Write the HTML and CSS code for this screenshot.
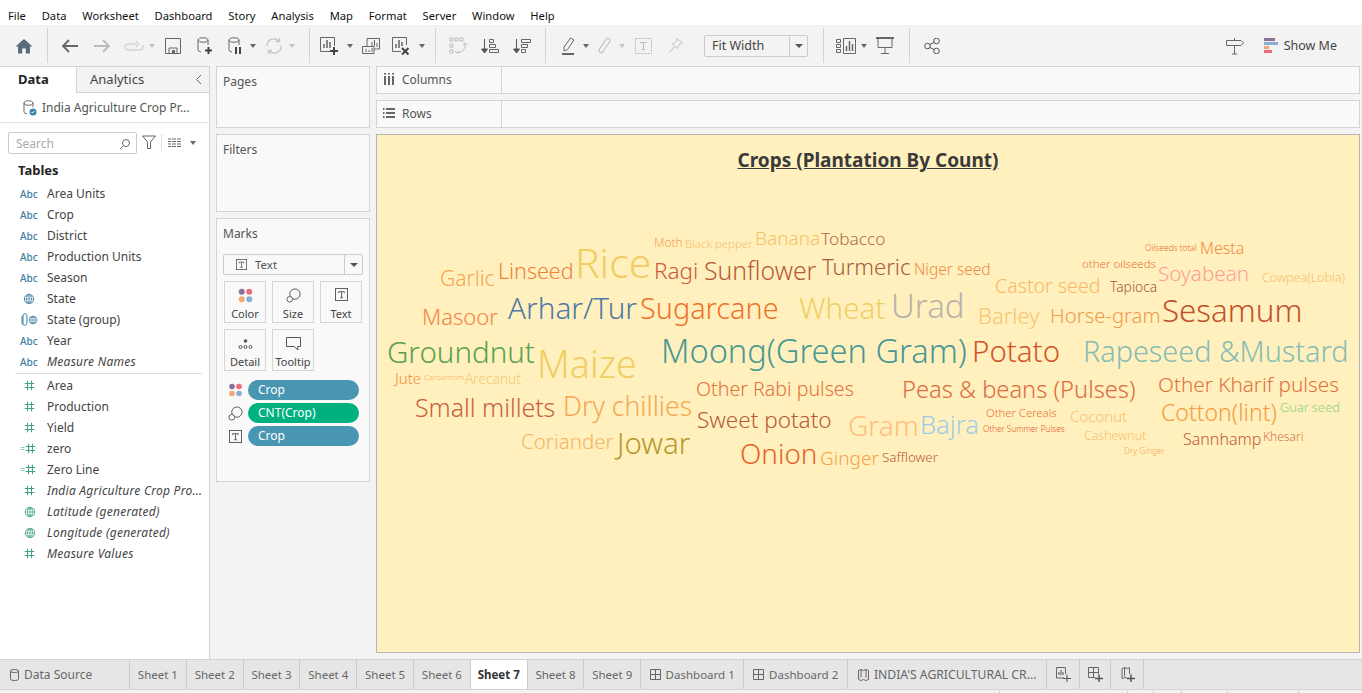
FILE: index.html
```html
<!DOCTYPE html>
<html>
<head>
    <title>Tableau - Sheet 7</title>
    <link rel="stylesheet" href="styles.css">
</head>
<body>
    <svg class="defs" width="0" height="0">
        <symbol id="i-abc-globe" viewBox="0 0 14 14"><circle cx="7" cy="7" r="5.5" fill="none" stroke="currentColor"/><path d="M1.5 7h11M7 1.5v11M3 3.5h8M3 10.500h8M7 1.500c-4 3-4 8 0 11M7 1.500c4 3 4 8 0 11" fill="none" stroke="currentColor" stroke-width=".8"/></symbol>
        <symbol id="i-hash" viewBox="0 0 14 14"><path d="M4.500 1v12M9.500 1v12M1 4.500h12M1 9.500h12" fill="none" stroke="currentColor" stroke-width="1.300"/></symbol>
        <symbol id="i-colors" viewBox="0 0 14 14"><circle cx="3.500" cy="3.500" r="2.800" fill="#8a7298"/><circle cx="10.500" cy="3.500" r="2.800" fill="#f0697c"/><circle cx="3.500" cy="10.500" r="2.800" fill="#f2a875"/><circle cx="10.500" cy="10.500" r="2.800" fill="#8aaed2"/></symbol>
        <symbol id="i-size" viewBox="0 0 16 16"><circle cx="9.500" cy="6.500" r="5.500" fill="none" stroke="#555"/><circle cx="4" cy="12" r="3" fill="#fff" stroke="#555"/></symbol>
        <symbol id="i-text" viewBox="0 0 14 14"><rect x=".5" y=".5" width="13" height="13" fill="none" stroke="#555"/><path d="M4 4h6M7 4v6.500M5.500 10.500h3M4 4v1.500M10 4v1.500" fill="none" stroke="#555"/></symbol>
    </svg>

    <div class="menu-bar">
        <span>File</span><span>Data</span><span>Worksheet</span><span>Dashboard</span><span>Story</span><span>Analysis</span><span>Map</span><span>Format</span><span>Server</span><span>Window</span><span>Help</span>
    </div>

    <div class="toolbar">
        <div class="tb-group g-home">
            <span class="tb"><svg width="18" height="16" viewBox="0 0 18 16"><path d="M9 1 0.500 8.500H3V15.500H7.200V10.500H10.800V15.500H15V8.500H17.500Z" fill="#5b6b7d"/></svg></span>
        </div>
        <div class="tb-group g-file">
            <span class="tb"><svg width="18" height="16" viewBox="0 0 18 16"><path d="M17 8H2M8 2 2 8l6 6" fill="none" stroke="#666" stroke-width="1.800"/></svg></span>
            <span class="tb"><svg width="18" height="16" viewBox="0 0 18 16"><path d="M1 8H16M10 2l6 6-6 6" fill="none" stroke="#bbb" stroke-width="1.800"/></svg></span>
            <span class="tb"><svg width="20" height="12" viewBox="0 0 20 12"><path d="M13 4H4a3 3 0 0 0 0 6h12a3 3 0 0 0 3-3V5M12 1l3 3-3 3" fill="none" stroke="#c4c4c4"/></svg></span>
            <span class="caret off"></span>
            <span class="tb"><svg width="16" height="16" viewBox="0 0 16 16"><path d="M.5.500h15v15H.5z" fill="none" stroke="#666"/><path d="M4 10h8v5.500H4z" fill="none" stroke="#666"/><path d="M7 12h3v3H7z" fill="#666"/></svg></span>
            <span class="tb"><svg width="16" height="18" viewBox="0 0 16 18"><path d="M1 3v10q0 1.500 3 2M1 3c0-3 10-3 10 0s-10 3-10 0M11 3v5" fill="none" stroke="#666"/><path d="M8 13.500h7M11.500 10v7" stroke="#444" stroke-width="2"/></svg></span>
            <span class="tb pull"><svg width="14" height="18" viewBox="0 0 14 18"><path d="M1 3v10q0 1.500 3 2M1 3c0-3 10-3 10 0s-10 3-10 0M11 3v5" fill="none" stroke="#666"/><path d="M8 10v7M12 10v7" stroke="#444" stroke-width="2"/></svg></span>
            <span class="caret"></span>
            <span class="tb"><svg width="18" height="18" viewBox="0 0 18 18"><path d="M2 9a7 7 0 0 1 12-5M16 9a7 7 0 0 1-12 5M14.500 1v3.500H11M3.500 17v-3.500H7" fill="none" stroke="#c4c4c4" stroke-width="1.300"/></svg></span>
            <span class="caret off"></span>
        </div>
        <div class="tb-group g-sheet">
            <span class="tb"><svg width="18" height="18" viewBox="0 0 18 18"><path d="M10 14.500H.5V.5h14V9" fill="none" stroke="#666"/><path d="M4 11V7M7 11V3M10 11V5" stroke="#666" stroke-width="1.500"/><path d="M10 14h8M14 10v8" stroke="#444" stroke-width="2"/></svg></span>
            <span class="caret"></span>
            <span class="tb"><svg width="18" height="16" viewBox="0 0 18 16"><path d="M5 8V.5h12.500V11H12" fill="none" stroke="#666"/><path d="M.5 8.500H12V15.500H.5z" fill="#f3f3f3" stroke="#666"/><path d="M10 8V4M12.500 8V2M15 9V5M4 14v-3M7 14v-2M10 14v-4" stroke="#666"/></svg></span>
            <span class="tb pull"><svg width="18" height="18" viewBox="0 0 18 18"><path d="M9 14.500H.5V.5h14V8" fill="none" stroke="#666"/><path d="M4 11V7M7 11V3M10 9V5" stroke="#666" stroke-width="1.500"/><path d="M10 11l6.500 6.500M16.500 11 10 17.500" stroke="#444" stroke-width="2"/></svg></span>
            <span class="caret"></span>
        </div>
        <div class="tb-group g-sort">
            <span class="tb"><svg width="18" height="18" viewBox="0 0 18 18"><path d="M1 1h3v3H1zM6 1h3v3H6zM11 1h3v3h-3zM1 7h3v3H1zM1 13h3v3H1z" fill="none" stroke="#bbb"/><path d="M16 6c1 5-2 9-8 10M6 14l2 2 2-2M14 8l2-2 2 2" fill="none" stroke="#bbb"/></svg></span>
            <span class="tb"><svg width="18" height="16" viewBox="0 0 18 16"><path d="M3.500 1v13M.5 11l3 4 3-4z" fill="#555" stroke="#555"/><path d="M8.500 1.500h4v3h-4zM8.500 6.500h6v3h-6zM8.500 11.500h9v3h-9z" fill="none" stroke="#666"/></svg></span>
            <span class="tb"><svg width="18" height="16" viewBox="0 0 18 16"><path d="M3.500 1v13M.5 11l3 4 3-4z" fill="#555" stroke="#555"/><path d="M8.500 1.500h9v3h-9zM8.500 6.500h6v3h-6zM8.500 11.500h4v3h-4z" fill="none" stroke="#666"/></svg></span>
        </div>
        <div class="tb-group g-mark">
            <span class="tb"><svg width="14" height="18" viewBox="0 0 14 18"><path d="M9.500 1 13 3 6.500 12.500 3 14 3 10z" fill="none" stroke="#666"/><path d="M1 17h12" stroke="#666" stroke-width="2"/></svg></span>
            <span class="caret"></span>
            <span class="tb pull-more"><svg width="14" height="18" viewBox="0 0 14 18"><path d="M3 11 9 2.500c2-2.500 5 0 3.500 2.500L6 14.500c-1.500 2.500-5 .500-3.500-2.500L8 4.500" fill="none" stroke="#c0c0c0" stroke-width="1.200"/></svg></span>
            <span class="caret off"></span>
            <span class="tb"><svg width="17" height="16" viewBox="0 0 17 16"><path d="M.5.500h16v15H.5z" fill="none" stroke="#bbb" stroke-dasharray="2 1"/><path d="M5 4.500h7M8.500 4.500v7M7 11.500h3" fill="none" stroke="#bbb"/></svg></span>
            <span class="tb"><svg width="15" height="16" viewBox="0 0 15 16"><path d="M9 .5 14.500 5 11.500 6 9.500 10.500 4.500 6 8.500 3.500zM6.500 8.500 1 15" fill="none" stroke="#c0c0c0"/></svg></span>
            <div class="fit-select"><span class="fit-label">Fit Width</span><span class="fit-arrow"><span class="caret dark"></span></span></div>
        </div>
        <div class="tb-group g-show">
            <span class="tb"><svg width="20" height="16" viewBox="0 0 20 16"><path d="M.5 1.500h4v3h-4zM.5 6.500h4v3h-4zM.5 11.500h4v3h-4zM7.500.5h12v15h-12z" fill="none" stroke="#666"/><path d="M10.500 13V8M13.500 13V3M16.500 13V6" stroke="#666" stroke-width="1.500"/></svg></span>
            <span class="caret"></span>
            <span class="tb"><svg width="18" height="17" viewBox="0 0 18 17"><path d="M0 1h18" stroke="#666" stroke-width="2"/><path d="M2 1v9.500h14V1M9 10.500V16M5 16.500h8" fill="none" stroke="#666"/></svg></span>
        </div>
        <div class="tb-group g-share">
            <span class="tb"><svg width="16" height="16" viewBox="0 0 16 16"><circle cx="3.500" cy="8" r="2.800" fill="none" stroke="#555"/><circle cx="12.500" cy="3" r="2.800" fill="none" stroke="#555"/><circle cx="12.500" cy="13" r="2.800" fill="none" stroke="#555"/><path d="M6 6.500 10 4.400M6 9.500l4 2.100" stroke="#555"/></svg></span>
        </div>
        <div class="tb-right">
            <svg width="18" height="18" viewBox="0 0 18 18"><path d="M.5 3.500H15L17.500 6 15 8.500H.5zM8.500 1v2.500M8.500 8.500V17M6 17h5" fill="none" stroke="#666"/></svg>
            <span class="show-me">
                <span class="sm-bars"><i class="b1"></i><i class="b2"></i><i class="b3"></i><i class="b4"></i></span>
                Show Me
            </span>
        </div>
    </div>

    <div class="workspace">
        <div class="side-pane">
            <div class="pane-tabs">
                <div class="pane-tab active">Data</div>
                <div class="pane-tab">Analytics<svg class="chev" width="7" height="11" viewBox="0 0 7 11"><path d="M6 1 1.500 5.500 6 10" fill="none" stroke="#666"/></svg></div>
            </div>
            <div class="source-row">
                <svg width="14" height="16" viewBox="0 0 14 16"><path d="M1 3v9q0 1.500 3 2M1 3c0-3 9-3 9 0s-9 3-9 0M10 3v4" fill="none" stroke="#666"/><circle cx="10" cy="12" r="3.500" fill="#3d86a8"/><path d="M8.500 12l1 1 2-2" fill="none" stroke="#fff"/></svg>
                India Agriculture Crop Pr...
            </div>
            <div class="search-row">
                <div class="search-box">Search
                    <svg width="12" height="12" viewBox="0 0 12 12"><circle cx="7" cy="5" r="3.500" fill="none" stroke="#666"/><path d="M4.500 7.500 1 11" stroke="#666"/></svg>
                </div>
                <svg class="funnel" width="14" height="15" viewBox="0 0 14 15"><path d="M.5 1h13L8.500 7v6.500h-3V7z" fill="none" stroke="#666"/></svg>
                <span class="search-sep"></span>
                <svg width="13" height="9" viewBox="0 0 13 9"><path d="M0 1h3M4 1h4M9 1h4M0 3.500h3M4 3.500h4M9 3.500h4M0 6h3M4 6h4M9 6h4M0 8.500h3M4 8.500h4M9 8.500h4" stroke="#666"/></svg>
                <span class="caret search-caret"></span>
            </div>
            <div class="tables-title">Tables</div>
            <ul class="field-list">
                <li><span class="fi abc">Abc</span>Area Units</li>
                <li><span class="fi abc">Abc</span>Crop</li>
                <li><span class="fi abc">Abc</span>District</li>
                <li><span class="fi abc">Abc</span>Production Units</li>
                <li><span class="fi abc">Abc</span>Season</li>
                <li><span class="fi blue"><svg width="12" height="12"><use href="#i-abc-globe"/></svg></span>State</li>
                <li><span class="fi blue group-ic"><svg width="7" height="13" viewBox="0 0 7 13"><path d="M2 11V3c0-3 4-3 4 0v7c0 3-5 3-5 0V3" fill="none" stroke="currentColor"/></svg><svg width="10" height="10"><use href="#i-abc-globe"/></svg></span>State (group)</li>
                <li><span class="fi abc">Abc</span>Year</li>
                <li class="ital"><span class="fi abc">Abc</span>Measure Names</li>
            </ul>
            <div class="list-sep"></div>
            <ul class="field-list">
                <li><span class="fi green"><svg width="11" height="11"><use href="#i-hash"/></svg></span>Area</li>
                <li><span class="fi green"><svg width="11" height="11"><use href="#i-hash"/></svg></span>Production</li>
                <li><span class="fi green"><svg width="11" height="11"><use href="#i-hash"/></svg></span>Yield</li>
                <li><span class="fi green calc">=<svg width="11" height="11"><use href="#i-hash"/></svg></span>zero</li>
                <li><span class="fi green calc">=<svg width="11" height="11"><use href="#i-hash"/></svg></span>Zero Line</li>
                <li class="ital"><span class="fi green"><svg width="11" height="11"><use href="#i-hash"/></svg></span>India Agriculture Crop Pro...</li>
                <li class="ital"><span class="fi green"><svg width="12" height="12"><use href="#i-abc-globe"/></svg></span>Latitude (generated)</li>
                <li class="ital"><span class="fi green"><svg width="12" height="12"><use href="#i-abc-globe"/></svg></span>Longitude (generated)</li>
                <li class="ital"><span class="fi green"><svg width="11" height="11"><use href="#i-hash"/></svg></span>Measure Values</li>
            </ul>
        </div>

        <div class="cards">
            <div class="card pages-card">Pages</div>
            <div class="card filters-card">Filters</div>
            <div class="card marks-card">
                <div class="marks-title">Marks</div>
                <div class="mark-type">
                    <span class="mark-type-name"><svg width="11" height="11"><use href="#i-text"/></svg>Text</span>
                    <span class="mark-type-arrow"><span class="caret dark"></span></span>
                </div>
                <div class="mark-buttons">
                    <div class="mark-btn"><svg width="15" height="15"><use href="#i-colors"/></svg>Color</div>
                    <div class="mark-btn"><svg width="15" height="15"><use href="#i-size"/></svg>Size</div>
                    <div class="mark-btn"><svg width="13" height="13"><use href="#i-text"/></svg>Text</div>
                    <div class="mark-btn"><svg width="15" height="15" viewBox="0 0 15 15"><circle cx="7.500" cy="5" r="1.800" fill="#555"/><circle cx="2.500" cy="11" r="1.500" fill="none" stroke="#555"/><circle cx="7.500" cy="11" r="1.500" fill="none" stroke="#555"/><circle cx="12.500" cy="11" r="1.500" fill="none" stroke="#555"/></svg>Detail</div>
                    <div class="mark-btn"><svg width="15" height="15" viewBox="0 0 15 15"><path d="M.5 1.500h14v9h-3l.5 3.500-4-3.500H.5z" fill="none" stroke="#555"/></svg>Tooltip</div>
                </div>
                <div class="pill-row"><svg width="14" height="14"><use href="#i-colors"/></svg><span class="pill blue-pill">Crop</span></div>
                <div class="pill-row"><svg width="15" height="15"><use href="#i-size"/></svg><span class="pill green-pill">CNT(Crop)</span></div>
                <div class="pill-row"><svg width="13" height="13"><use href="#i-text"/></svg><span class="pill blue-pill">Crop</span></div>
            </div>
        </div>

        <div class="main">
            <div class="shelf">
                <div class="shelf-label"><svg width="12" height="12" viewBox="0 0 12 12"><path d="M2 3v9M6 3v9M10 3v9M2 0v1.500M6 0v1.500M10 0v1.500" stroke="#666" stroke-width="2"/></svg>Columns</div>
            </div>
            <div class="shelf">
                <div class="shelf-label"><svg width="12" height="12" viewBox="0 0 12 12"><path d="M3 2h9M3 6h9M3 10h9M0 2h1.500M0 6h1.500M0 10h1.500" stroke="#666" stroke-width="2"/></svg>Rows</div>
            </div>
            <div class="view">
                <div class="view-title">Crops (Plantation By Count)</div>
                <span class="word" style="--x:575;--b:277;--s:41;color:#f1ce63">Rice</span>
                <span class="word" style="--x:537;--b:377;--s:37.600;color:#f1ce63">Maize</span>
                <span class="word" style="--x:387;--b:362;--s:29.500;color:#59a14f">Groundnut</span>
                <span class="word" style="--x:661;--b:363;--s:32.600;color:#499894">Moong(Green Gram)</span>
                <span class="word" style="--x:1162;--b:322;--s:31.300;color:#c2502d">Sesamum</span>
                <span class="word" style="--x:1083;--b:361;--s:28.800;color:#86bcb6">Rapeseed &amp;Mustard</span>
                <span class="word" style="--x:972;--b:361;--s:29.500;color:#d4532a">Potato</span>
                <span class="word" style="--x:891;--b:317;--s:33;color:#bab0ac">Urad</span>
                <span class="word" style="--x:799;--b:318;--s:29.500;color:#f1ce63">Wheat</span>
                <span class="word" style="--x:508;--b:318;--s:29.700;color:#4e79a7">Arhar/Tur</span>
                <span class="word" style="--x:640;--b:318;--s:28.800;color:#f0702a">Sugarcane</span>
                <span class="word" style="--x:740;--b:464;--s:27.800;color:#e6622a">Onion</span>
                <span class="word" style="--x:848;--b:435;--s:28;color:#ffbe7d">Gram</span>
                <span class="word" style="--x:920;--b:434;--s:25.500;color:#a0cbe8">Bajra</span>
                <span class="word" style="--x:902;--b:398;--s:23.700;color:#dd6a3c">Peas &amp; beans (Pulses)</span>
                <span class="word" style="--x:1158;--b:392;--s:20.700;color:#e0703a">Other Kharif pulses</span>
                <span class="word" style="--x:1161;--b:421;--s:23;color:#f59a42">Cotton(lint)</span>
                <span class="word" style="--x:415;--b:416;--s:24.800;color:#c8603c">Small millets</span>
                <span class="word" style="--x:563;--b:416;--s:26.600;color:#f5a655">Dry chillies</span>
                <span class="word" style="--x:696;--b:396;--s:19.600;color:#e4703c">Other Rabi pulses</span>
                <span class="word" style="--x:697;--b:428;--s:22.500;color:#b85a38">Sweet potato</span>
                <span class="word" style="--x:617;--b:453;--s:29.500;color:#b6992d">Jowar</span>
                <span class="word" style="--x:521;--b:448;--s:20.500;color:#f5b564">Coriander</span>
                <span class="word" style="--x:820;--b:465;--s:19;color:#f8a04c">Ginger</span>
                <span class="word" style="--x:882;--b:462;--s:13.400;color:#b85a38">Safflower</span>
                <span class="word" style="--x:395;--b:384;--s:15;color:#f58c3c">Jute</span>
                <span class="word" style="--x:424;--b:380;--s:8;color:#f8b060">Cardamom</span>
                <span class="word" style="--x:465;--b:384;--s:13.700;color:#f5c870">Arecanut</span>
                <span class="word" style="--x:422;--b:324;--s:22;color:#f2854a">Masoor</span>
                <span class="word" style="--x:440;--b:286;--s:21;color:#f5a655">Garlic</span>
                <span class="word" style="--x:498;--b:278;--s:21.500;color:#f0803c">Linseed</span>
                <span class="word" style="--x:654;--b:279;--s:22.500;color:#cc5a38">Ragi</span>
                <span class="word" style="--x:704;--b:279;--s:24.800;color:#b85a38">Sunflower</span>
                <span class="word" style="--x:822;--b:274;--s:22;color:#a85a40">Turmeric</span>
                <span class="word" style="--x:914;--b:275;--s:15.500;color:#f08a4a">Niger seed</span>
                <span class="word" style="--x:654;--b:247;--s:12;color:#f59a55">Moth</span>
                <span class="word" style="--x:685;--b:248;--s:11.400;color:#f5c070">Black pepper</span>
                <span class="word" style="--x:755;--b:245;--s:19;color:#f5c468">Banana</span>
                <span class="word" style="--x:821;--b:245;--s:17.300;color:#b06a48">Tobacco</span>
                <span class="word" style="--x:995;--b:293;--s:19.600;color:#f8b868">Castor seed</span>
                <span class="word" style="--x:1110;--b:292;--s:13.800;color:#a05a40">Tapioca</span>
                <span class="word" style="--x:978;--b:323;--s:22;color:#f8c46c">Barley</span>
                <span class="word" style="--x:1050;--b:322;--s:20.300;color:#f09a50">Horse-gram</span>
                <span class="word" style="--x:1145;--b:251;--s:8.400;color:#e86a30">Oilseeds total</span>
                <span class="word" style="--x:1200;--b:254;--s:16;color:#f28a48">Mesta</span>
                <span class="word" style="--x:1082;--b:268;--s:11.500;color:#e8703a">other oilseeds</span>
                <span class="word" style="--x:1158;--b:281;--s:20.700;color:#ff9d9a">Soyabean</span>
                <span class="word" style="--x:1262;--b:283;--s:12.500;color:#f8c070">Cowpea(Lobia)</span>
                <span class="word" style="--x:1280;--b:412;--s:12.800;color:#8cd17d">Guar seed</span>
                <span class="word" style="--x:986;--b:417;--s:11.300;color:#e8703a">Other Cereals</span>
                <span class="word" style="--x:1070;--b:422;--s:15;color:#f8c070">Coconut</span>
                <span class="word" style="--x:983;--b:432;--s:8.200;color:#e0562a">Other Summer Pulses</span>
                <span class="word" style="--x:1084;--b:441;--s:12.400;color:#f8c070">Cashewnut</span>
                <span class="word" style="--x:1124;--b:454;--s:8.300;color:#f5a655">Dry Ginger</span>
                <span class="word" style="--x:1183;--b:445;--s:16;color:#c05a38">Sannhamp</span>
                <span class="word" style="--x:1263;--b:441;--s:12;color:#d8744a">Khesari</span>
            </div>
        </div>
    </div>

    <div class="tab-bar">
        <div class="tab source-tab"><svg width="9" height="12" viewBox="0 0 9 12"><path d="M.5 2v8c0 2 8 2 8 0V2M.5 2c0-2 8-2 8 0s-8 2-8 0" fill="none" stroke="#666"/></svg>Data Source</div>
        <div class="tab w57">Sheet 1</div>
        <div class="tab w57">Sheet 2</div>
        <div class="tab w57">Sheet 3</div>
        <div class="tab w57">Sheet 4</div>
        <div class="tab w57">Sheet 5</div>
        <div class="tab w57">Sheet 6</div>
        <div class="tab w57 current">Sheet 7</div>
        <div class="tab w57">Sheet 8</div>
        <div class="tab w57">Sheet 9</div>
        <div class="tab w103"><svg width="11" height="11" viewBox="0 0 11 11"><path d="M.5.500h10v10H.5zM5.500.5v10M.5 5.500h10" fill="none" stroke="#666"/></svg>Dashboard 1</div>
        <div class="tab w104"><svg width="11" height="11" viewBox="0 0 11 11"><path d="M.5.500h10v10H.5zM5.500.5v10M.5 5.500h10" fill="none" stroke="#666"/></svg>Dashboard 2</div>
        <div class="tab w199"><svg width="11" height="12" viewBox="0 0 11 12"><path d="M.5 1.500 3 .5l2.500 1 2.500-1 2.500 1v9l-2.500 1-2.500-1-2.500 1-2.500-1zM3 .5v8M8 .5v8" fill="none" stroke="#666"/></svg>INDIA'S AGRICULTURAL CR...</div>
        <div class="tab w33"><svg width="15" height="15" viewBox="0 0 15 15"><path d="M8 11H.5V.5h9V7" fill="none" stroke="#666"/><path d="M3 8V5M5 8V3M7 8V5M7 11.500h8M11 7.500v8" stroke="#555"/></svg></div>
        <div class="tab w31"><svg width="15" height="15" viewBox="0 0 15 15"><path d="M7 10.500H.5V.5h10V7M5.500.5v10M.5 5.500h10" fill="none" stroke="#666"/><path d="M7 11.500h8M11 7.500v8" stroke="#555" stroke-width="1.500"/></svg></div>
        <div class="tab w33"><svg width="15" height="15" viewBox="0 0 15 15"><path d="M7 11 4.500 10.500 2 11.500V1.500L4.500.5 7 1.500 9.500.5V7M4.500.5v9" fill="none" stroke="#666"/><path d="M7 11.500h8M11 7.500v8" stroke="#555" stroke-width="1.500"/></svg></div>
    </div>
    <div class="status-bar"><span class="st1"></span><span class="st2"></span><span class="st3"></span><span class="st4"></span><span class="st5"></span><span class="st6"></span></div>
</body>
</html>
```

FILE: styles.css
```css
* {
    box-sizing: border-box;
}

html, body {
    height: 100%;
}

body {
    margin: 0;
    font-family: "Noto Sans", "Open Sans", sans-serif;
    font-size: 12px;
    color: #333;
    background-color: #f3f3f3;
    overflow: hidden;
    display: flex;
    flex-direction: column;
}

.defs {
    position: absolute;
}

/* menu */
.menu-bar {
    height: 25px;
    flex: none;
    background-color: #fff;
    display: flex;
    align-items: center;
    padding: 5px 0 0 8px;
    gap: 15.800px;
    font-size: 11.200px;
    color: #111;
}

/* toolbar */
.toolbar {
    height: 41px;
    flex: none;
    display: flex;
    align-items: center;
    background-color: #f3f3f3;
}

.tb-group {
    height: 35px;
    display: flex;
    align-items: center;
    border-right: 1px solid #d4d4d4;
}

.g-home {
    width: 48px;
    padding-left: 8px;
}

.g-file {
    width: 262px;
    padding-left: 6px;
}

.g-sheet {
    width: 126px;
    padding-left: 3px;
}

.g-sheet .caret {
    margin-left: 2px;
}

.g-sort {
    width: 110px;
    padding-left: 6px;
}

.g-mark {
    width: 278px;
    padding-left: 6px;
}

.g-show {
    width: 86px;
    padding-left: 6px;
}

.g-share {
    border-right: none;
    padding-left: 6px;
}

.tb {
    width: 32px;
    flex: none;
    display: flex;
    justify-content: center;
    align-items: center;
}

.tb.pull {
    margin-left: -2px;
}

.tb.pull-more {
    margin-left: -3px;
}

.caret {
    display: inline-block;
    flex: none;
    width: 0;
    height: 0;
    border-left: 3.500px solid transparent;
    border-right: 3.500px solid transparent;
    border-top: 4px solid #666;
    margin-left: -1px;
    margin-right: 2px;
}

.caret.off {
    border-top-color: #c4c4c4;
}

.caret.dark {
    margin: 0;
    border-left-width: 4px;
    border-right-width: 4px;
    border-top-color: #555;
}

.fit-select {
    width: 104px;
    height: 22px;
    margin-left: 13px;
    display: flex;
    flex: none;
    background-color: #f3f3f3;
    border: 1px solid #ccc;
    border-radius: 2px;
    font-size: 12.500px;
    color: #444;
}

.fit-label {
    flex: 1;
    padding-left: 7px;
    line-height: 19px;
}

.fit-arrow {
    width: 18px;
    display: flex;
    align-items: center;
    justify-content: center;
    border-left: 1px solid #ccc;
}

.tb-right {
    margin-left: auto;
    display: flex;
    align-items: center;
    gap: 20px;
    padding-right: 25px;
}

.show-me {
    display: flex;
    align-items: center;
    gap: 6px;
    color: #444;
    font-size: 12.500px;
}

.sm-bars {
    display: flex;
    flex-direction: column;
    gap: 0;
    width: 14px;
}

.sm-bars i {
    display: block;
    height: 3px;
    margin-bottom: 1px;
}

.b1 {
    width: 11px;
    background-color: #8a7298;
}

.b2 {
    width: 14px;
    background-color: #8aaed2;
}

.b3 {
    width: 5px;
    background-color: #f2a875;
}

.b4 {
    width: 8px;
    background-color: #f0697c;
}

/* main area */
.workspace {
    flex: 1;
    display: flex;
    min-height: 0;
}

.side-pane {
    width: 210px;
    flex: none;
    background-color: #fff;
    border-right: 1px solid #d4d4d4;
    border-top: 1px solid #d4d4d4;
    color: #444;
}

.pane-tabs {
    display: flex;
    height: 26px;
    font-size: 13px;
}

.pane-tab {
    flex: 1;
    background-color: #f3f3f3;
    border-bottom: 1px solid #d4d4d4;
    padding: 3px 0 0 13px;
    position: relative;
}

.pane-tab.active {
    flex: none;
    width: 77px;
    padding-left: 18px;
    font-weight: bold;
    color: #222;
    background-color: #fff;
    border-bottom: none;
    border-right: 1px solid #d4d4d4;
}

.chev {
    position: absolute;
    right: 7px;
    top: 7px;
}

.source-row {
    height: 30px;
    display: flex;
    align-items: center;
    gap: 5px;
    padding-left: 23px;
    border-bottom: 1px solid #e4e4e4;
    color: #555;
}

.search-row {
    display: flex;
    align-items: center;
    height: 21px;
    margin-top: 9px;
    padding-left: 8px;
}

.search-box {
    width: 129px;
    height: 22px;
    border: 1px solid #ccc;
    border-radius: 2px;
    color: #aaa;
    padding: 2px 0 0 7px;
    display: flex;
    justify-content: space-between;
}

.search-box svg {
    margin: 3px 5px 0 0;
}

.funnel {
    margin-left: 5px;
}

.search-sep {
    width: 1px;
    height: 17px;
    margin: 0 6px 0 5px;
    background-color: #ddd;
}

.search-caret {
    margin-left: 9px;
}

.tables-title {
    padding: 8px 0 0 18px;
    height: 30px;
    font-size: 13px;
    font-weight: bold;
    color: #222;
}

.field-list {
    list-style: none;
    margin: 0;
    padding: 0;
}

.field-list li {
    height: 21px;
    display: flex;
    align-items: center;
    white-space: nowrap;
    color: #444;
}

.field-list li.ital {
    font-style: italic;
    letter-spacing: .25px;
}

.fi {
    width: 47px;
    flex: none;
    padding-left: 20px;
    display: flex;
    align-items: center;
    letter-spacing: 0;
}

.fi.abc {
    font-size: 10px;
    font-weight: 500;
    font-style: normal;
    color: #3f7f9f;
}

.fi.blue {
    color: #3f7f9f;
    padding-left: 23px;
}

.fi.blue.group-ic {
    padding-left: 21px;
}

.fi.green {
    color: #3fa37c;
    padding-left: 24px;
}

.fi.green.calc {
    padding-left: 20px;
    font-size: 9px;
    font-style: normal;
}

.list-sep {
    height: 1px;
    margin: 1px 7px 0 15px;
    background-color: #ddd;
}

.list-sep + .field-list {
    margin-top: 1px;
}

.cards {
    width: 154px;
    flex: none;
    margin-left: 6px;
    display: flex;
    flex-direction: column;
    gap: 6px;
}

.card {
    background-color: #f9f9f9;
    border: 1px solid #d4d4d4;
    padding: 6px;
    color: #555;
}

.pages-card {
    height: 62px;
}

.filters-card {
    height: 78px;
}

.marks-card {
    height: 264px;
}

.marks-title {
    height: 21px;
}

.mark-type {
    width: 140px;
    height: 21px;
    margin-top: 8px;
    display: flex;
    background-color: #f9f9f9;
    border: 1px solid #ccc;
    border-radius: 2px;
}

.mark-type-name {
    flex: 1;
    display: flex;
    align-items: center;
    gap: 8px;
    padding-left: 12px;
    font-size: 11.500px;
}

.mark-type-arrow {
    width: 18px;
    display: flex;
    align-items: center;
    justify-content: center;
    border-left: 1px solid #ccc;
}

.mark-buttons {
    display: grid;
    grid-template-columns: 42px 42px 42px;
    grid-auto-rows: 42px;
    column-gap: 6px;
    row-gap: 6px;
    margin-top: 6px;
    margin-left: 1px;
}

.mark-btn {
    border: 1px solid #d4d4d4;
    display: flex;
    flex-direction: column;
    align-items: center;
    justify-content: space-between;
    padding: 6px 0 1px;
    font-size: 11px;
    color: #444;
    white-space: nowrap;
}

.pill-row {
    display: flex;
    align-items: center;
    height: 20px;
    margin-top: 3px;
    gap: 5px;
    padding-left: 5px;
}

.mark-buttons + .pill-row {
    margin-top: 9px;
}

.pill-row svg {
    width: 15px;
    flex: none;
}

.pill {
    width: 111px;
    height: 20px;
    border-radius: 10px;
    color: #fff;
    padding-left: 10px;
    line-height: 19px;
}

.blue-pill {
    background-color: #4996b2;
}

.green-pill {
    background-color: #00b180;
}

.main {
    flex: 1;
    min-width: 0;
    margin-left: 6px;
    margin-right: 2px;
    display: flex;
    flex-direction: column;
    gap: 6px;
}

.shelf {
    height: 28px;
    flex: none;
    background-color: #f9f9f9;
    border: 1px solid #d4d4d4;
}

.shelf-label {
    width: 125px;
    height: 100%;
    display: flex;
    align-items: center;
    gap: 7px;
    padding: 0 0 2px 6px;
    border-right: 1px solid #d4d4d4;
    color: #555;
}

.view {
    height: 519px;
    flex: none;
    position: relative;
    background-color: #fff0bd;
    border: 1px solid #b5b5b5;
}

.view-title {
    padding-top: 12px;
    text-align: center;
    font-size: 19px;
    font-weight: bold;
    text-decoration: underline;
    color: #3a3a3a;
}

/* word cloud: --x and --b are the page x and baseline of each word */
.word {
    position: absolute;
    left: calc((var(--x) - 377) * 1px);
    top: calc((var(--b) - 135 - var(--s) * .85) * 1px);
    font-size: calc(var(--s) * 1px);
    font-weight: 300;
    line-height: 1;
    white-space: nowrap;
}

/* sheet tabs */
.tab-bar {
    flex: none;
    height: 31px;
    display: flex;
    background-color: #e6e6e6;
    border-top: 1px solid #d4d4d4;
    border-bottom: 1px solid #d4d4d4;
    color: #666;
    font-size: 11.500px;
}

.tab {
    display: flex;
    align-items: center;
    justify-content: center;
    gap: 5px;
    border-right: 1px solid #ccc;
    white-space: nowrap;
}

.source-tab {
    width: 130px;
    justify-content: flex-start;
    padding-left: 10px;
    font-size: 12px;
}

.w57 {
    width: 56.800px;
}

.w103 {
    width: 103px;
}

.w104 {
    width: 104px;
}

.w199 {
    width: 199px;
    font-size: 12.200px;
}

.w33 {
    width: 33px;
}

.w31 {
    width: 31px;
}

.tab.current {
    background-color: #fff;
    color: #333;
    font-weight: bold;
}

.status-bar {
    flex: none;
    height: 3px;
    display: flex;
    background-color: #f3f3f3;
}

.status-bar span {
    height: 3px;
    border-right: 1px solid #d4d4d4;
}

.st1 {
    width: 1000px;
}

.st2 {
    width: 128px;
}

.st3 {
    width: 26px;
}

.st4 {
    width: 28px;
}

.st5 {
    width: 46px;
}

.st6 {
    width: 71px;
}
```
